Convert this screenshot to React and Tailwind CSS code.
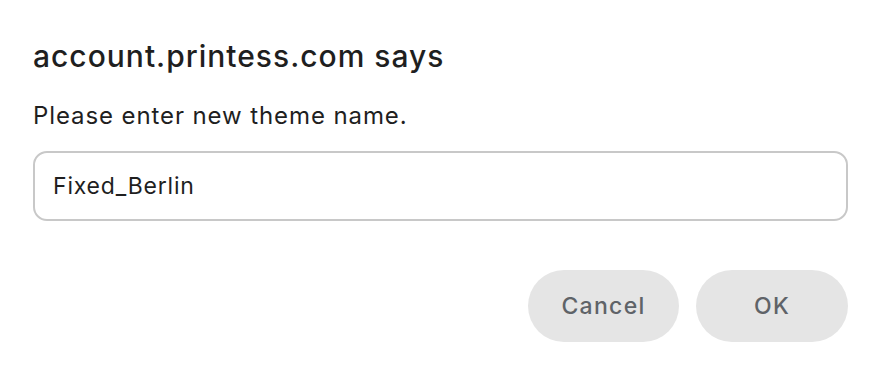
export default function App() {
  return (
    <div className="w-[876px] h-[372px] bg-white relative" style={{ fontFamily: 'Inter, "Noto Sans", sans-serif' }}>
      <div className="pt-[38px] px-[33px]">
        <div className="text-[30px] leading-[36px] font-medium tracking-[1px] text-[#1f1f1f]">account.printess.com says</div>
        <div className="mt-[27px] text-[24px] leading-[30px] tracking-[0.9px] text-[#1f1f1f]">Please enter new theme name.</div>
        <div className="mt-[20px] w-[815px] h-[70px] border-2 border-[#c8c8c8] rounded-[14px] flex items-center pl-[18px] text-[23px] tracking-[0.8px] text-[#1f1f1f]">Fixed_Berlin</div>
        <div className="mt-[49px] flex justify-end gap-[17px] w-[815px]">
          <div className="w-[151px] h-[72px] rounded-full bg-[#e5e5e5] flex items-center justify-center text-[23px] font-medium tracking-[1.3px] text-[#5f6368]">Cancel</div>
          <div className="w-[152px] h-[72px] rounded-full bg-[#e5e5e5] flex items-center justify-center text-[23px] font-medium tracking-[1.3px] text-[#5f6368]">OK</div>
        </div>
      </div>
    </div>
  );
}
